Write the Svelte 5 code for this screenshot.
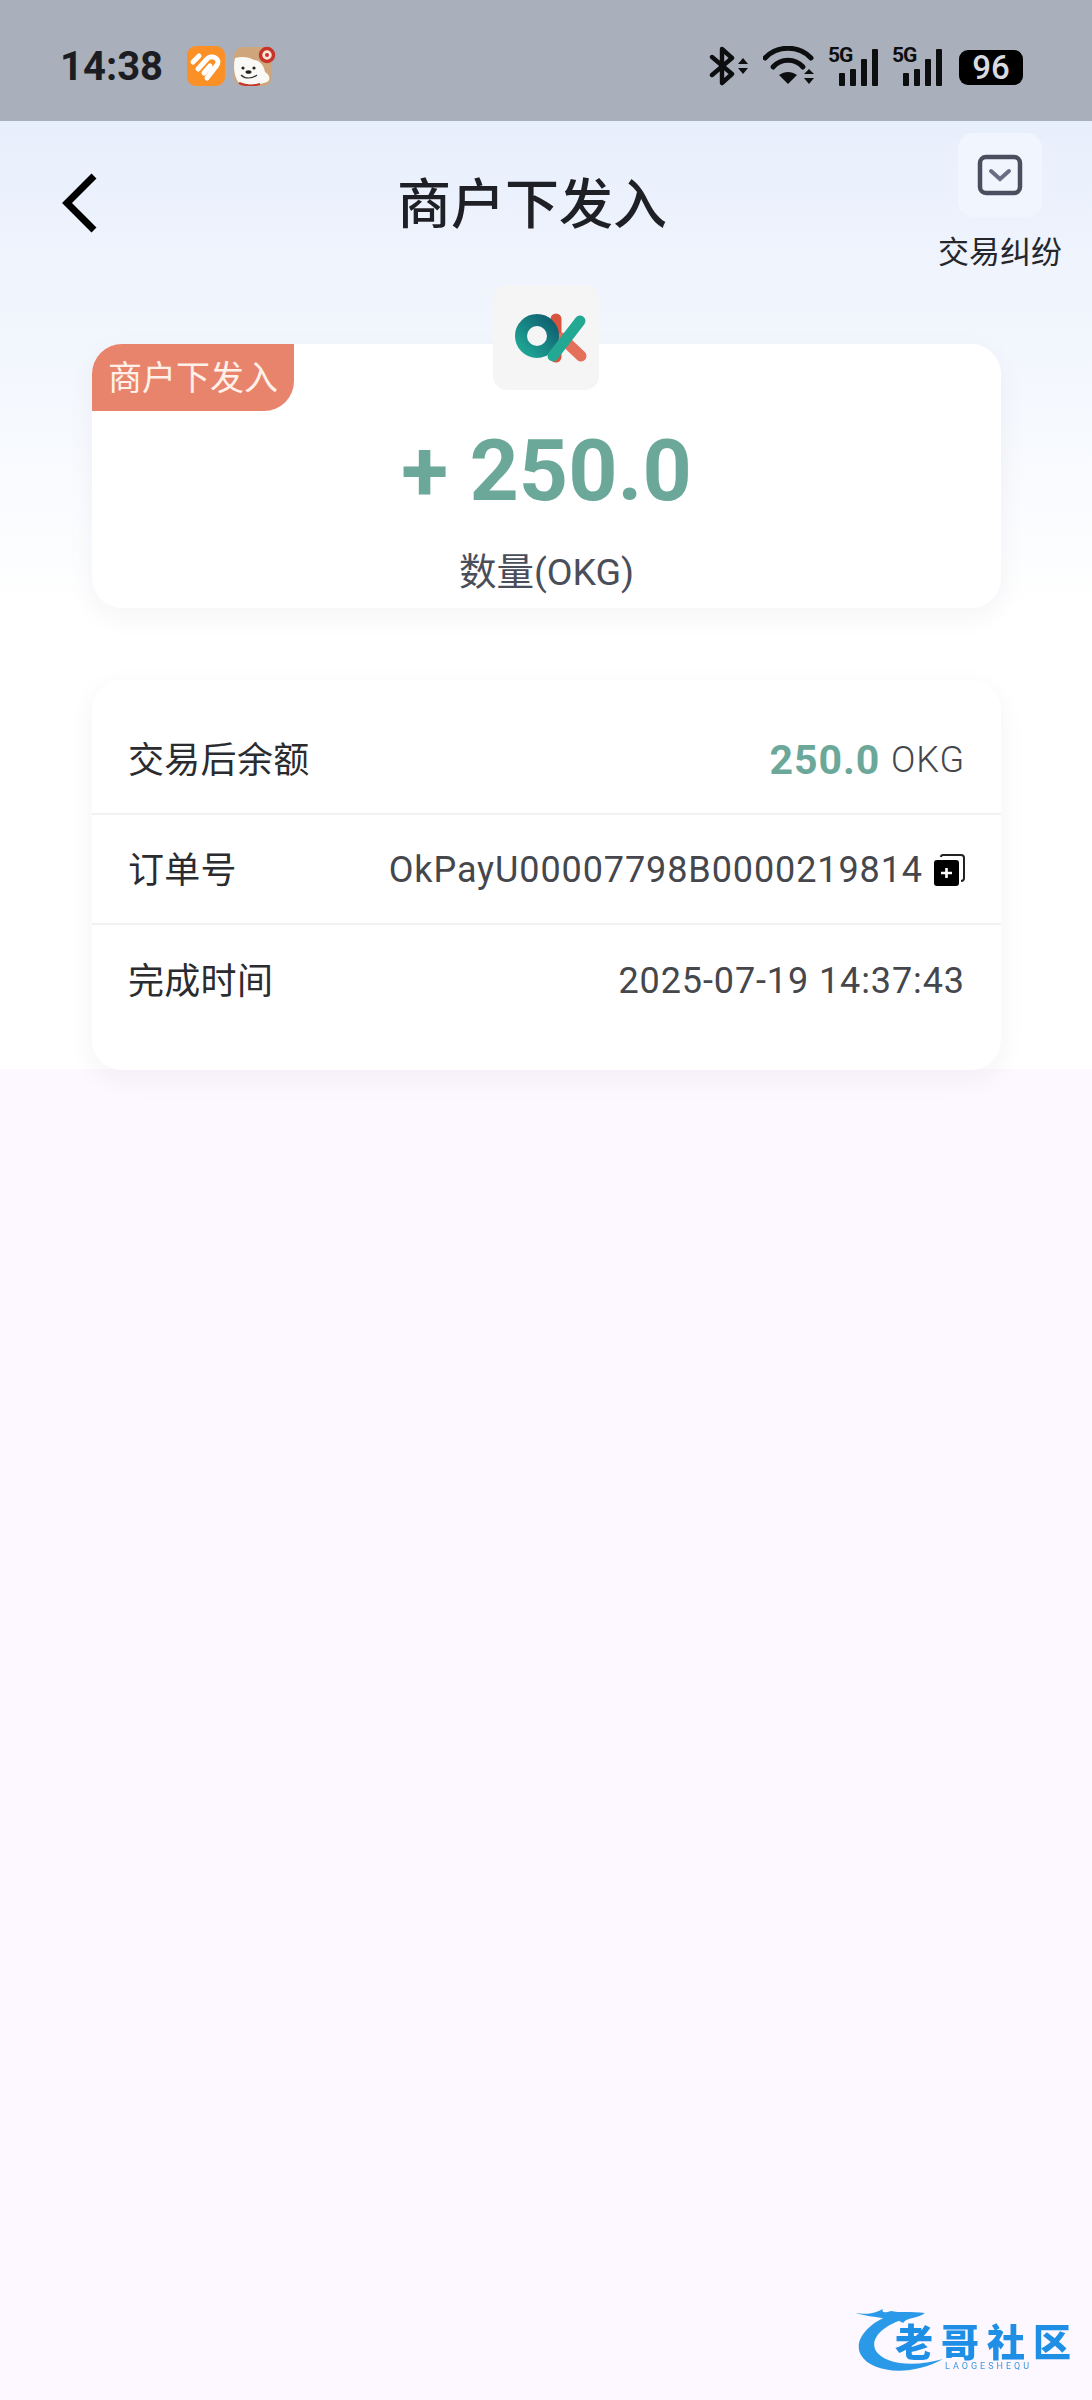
<script>
    // datos de la tarjeta de detalle
    const rows = [
        { label: '交易后余额', kind: 'balance', amount: '250.0', unit: 'OKG' },
        { label: '订单号', kind: 'order', value: 'OkPayU00007798B0000219814' },
        { label: '完成时间', kind: 'plain', value: '2025-07-19 14:37:43' }
    ];
    const sims = [1, 2];
</script>

<div class="page">
    <!-- Barra de estado -->
    <div class="status">
        <div class="status-left">
            <span class="time">14:38</span>
            <svg class="app-icon" viewBox="0 0 38 40">
                <rect width="38" height="40" rx="9" fill="#fb9027" />
                <path d="M6 16 L12 10 M11 23 L20 13 C25 8 34 13 30 19 L20 32 M17 27 L23 20" fill="none" stroke="#fff" stroke-width="5" stroke-linecap="round" />
            </svg>
            <svg class="app-icon dog" viewBox="0 0 42 40">
                <rect y="1" width="38" height="39" rx="9" fill="#cfa67c" />
                <path d="M1 12 C8 10 15 11 20 14 C26 14 30 20 31 26 C36 29 37 34 33 36 C25 39 10 40 5 37 C0 31 -1 20 1 12 Z" fill="#fbf9f5" />
                <circle cx="33" cy="9" r="6.5" fill="#fbe6d8" stroke="#c9342a" stroke-width="3.5" />
                <circle cx="33" cy="9" r="2" fill="#c9342a" />
                <circle cx="9" cy="22" r="1.6" fill="#222" />
                <circle cx="20" cy="22" r="1.6" fill="#222" />
                <ellipse cx="14.5" cy="26" rx="3" ry="1.8" fill="#222" />
                <path d="M7 29 C11 33 18 33 23 29" fill="none" stroke="#333" stroke-width="1.2" />
                <path d="M5 37 C11 40 20 40 26 38" fill="none" stroke="#c9342a" stroke-width="2" />
            </svg>
        </div>
        <div class="status-right">
            <svg class="bt" viewBox="0 0 39 40">
                <path d="M3 11 L23 28 L13 37 L13 3 L23 12 L3 29" fill="none" stroke="#0d0e10" stroke-width="4.4" stroke-linejoin="round" stroke-linecap="round" />
                <path d="M29 18 L34 12 L39 18 Z M29 22 L34 28 L39 22 Z" fill="#0d0e10" />
            </svg>
            <svg class="wifi" viewBox="0 0 53 40">
                <path d="M2 12 C14 -1 36 -1 48 12" fill="none" stroke="#0d0e10" stroke-width="5" stroke-linecap="round" />
                <path d="M10 21 C18 12 32 12 40 21" fill="none" stroke="#0d0e10" stroke-width="5" stroke-linecap="round" />
                <path d="M16 29 L25 38 L34 29 C28 25 22 25 16 29 Z" fill="#0d0e10" />
                <path d="M41 28 L46 23 L51 28 Z M41 32 L46 38 L51 32 Z" fill="#0d0e10" />
            </svg>
            {#each sims as sim}
                <div class="signal">
                    <span class="five-g">5G</span>
                    <i class="bar b1"></i>
                    <i class="bar b2"></i>
                    <i class="bar b3"></i>
                    <i class="bar b4"></i>
                </div>
            {/each}
            <div class="battery"><span>96</span></div>
        </div>
    </div>

    <div class="top">
        <!-- Cabecera -->
        <div class="header">
            <svg class="back" viewBox="0 0 36 60">
                <path d="M33 3 L6 30 L33 57" fill="none" stroke="#000" stroke-width="7" />
            </svg>
            <h1>商户下发入</h1>
            <div class="dispute">
                <div class="dispute-box">
                    <svg viewBox="0 0 46 42">
                        <rect x="3" y="3" width="40" height="36" rx="6" fill="none" stroke="#4b4e5e" stroke-width="4.5" />
                        <path d="M14 17 L23 25 L32 17" fill="none" stroke="#6a6d85" stroke-width="4" stroke-linecap="round" />
                    </svg>
                </div>
                <span>交易纠纷</span>
            </div>
        </div>

        <!-- Importe -->
        <div class="card amount-card">
            <div class="tag">商户下发入</div>
            <div class="logo">
                <svg viewBox="0 0 106 105">
                    <defs>
                        <linearGradient id="ring" x1="0" y1="1" x2="1" y2="0">
                            <stop offset="0" stop-color="#1fa795" />
                            <stop offset="1" stop-color="#0f5f70" />
                        </linearGradient>
                    </defs>
                    <path d="M63 34 L63 72" stroke="#d9543f" stroke-width="11" stroke-linecap="round" />
                    <path d="M69 53 L88 71" stroke="#e4705c" stroke-width="11" stroke-linecap="round" />
                    <circle cx="44" cy="51" r="16" fill="none" stroke="url(#ring)" stroke-width="12" />
                    <path d="M60 71 L87 36" stroke="#22a893" stroke-width="11" stroke-linecap="round" />
                </svg>
            </div>
            <div class="amount">+ 250.0</div>
            <div class="amount-label">数量(OKG)</div>
        </div>

        <!-- Detalle -->
        <div class="card detail-card">
            {#each rows as row}
                <div class="row">
                    <span class="label">{row.label}</span>
                    {#if row.kind === 'balance'}
                        <span class="value"><b>{row.amount}</b> <em>{row.unit}</em></span>
                    {:else if row.kind === 'order'}
                        <span class="value order">
                            {row.value}
                            <svg class="copy" viewBox="0 0 31 32">
                                <path d="M7 3 Q7 1 9 1 L27 1 Q30 1 30 4 L30 24 Q30 27 27 27" fill="none" stroke="#222" stroke-width="2" />
                                <rect x="0" y="6" width="25" height="26" rx="3" fill="#000" />
                                <path d="M7 19 L18 19 M12.5 14 L12.5 24" stroke="#fff" stroke-width="2.6" />
                            </svg>
                        </span>
                    {:else}
                        <span class="value">{row.value}</span>
                    {/if}
                </div>
            {/each}
        </div>
    </div>

    <!-- Marca de agua -->
    <div class="watermark">
        <svg viewBox="0 0 100 70">
            <path d="M38 9 C12 18 -2 36 6 50 C16 68 56 72 88 54 C60 62 30 60 21 46 C14 34 28 20 50 14 Z" fill="#2a9ae8" />
            <path d="M0 8 C14 10 20 8 28 4 C26 8 30 8 36 6 C44 8 56 6 70 8 C62 14 52 12 48 18 C42 14 36 14 30 14 C26 12 14 12 0 8 Z" fill="#2a9ae8" />
        </svg>
        <div class="wm-text">
            <strong>老哥社区</strong>
            <small>LAOGESHEQU</small>
        </div>
    </div>
</div>

<style>
    :global(body) {
        margin: 0;
        background: #fdf7ff;
    }

    .page {
        position: relative;
        min-height: 2400px;
        font-family: Roboto, "Noto Sans CJK SC", sans-serif;
        background: #fdf7ff;
    }

    .status {
        height: 121px;
        box-sizing: border-box;
        padding: 46px 69px 0 60px;
        display: flex;
        justify-content: space-between;
        align-items: flex-start;
        background: #a9afbb;
    }

    .status-left {
        display: flex;
        align-items: center;
        height: 40px;
    }

    .time {
        font-size: 40px;
        font-weight: 700;
        color: #1b1d22;
        width: 127px;
    }

    .app-icon {
        width: 38px;
        height: 40px;
        margin-right: 9px;
    }

    .app-icon.dog {
        width: 42px;
    }

    .status-right {
        display: flex;
        align-items: flex-end;
        height: 40px;
    }

    .bt {
        width: 39px;
        height: 40px;
        margin-right: 15px;
    }

    .wifi {
        width: 53px;
        height: 40px;
        margin-right: 13px;
    }

    .signal {
        position: relative;
        width: 49px;
        height: 38px;
        margin-right: 15px;
    }

    .five-g {
        position: absolute;
        left: -1px;
        top: -5px;
        font-size: 21px;
        font-weight: 700;
        letter-spacing: -1px;
        color: #0d0e10;
    }

    .bar {
        position: absolute;
        bottom: 0;
        width: 6px;
        background: #0d0e10;
        border-radius: 1px;
    }

    .b1 {
        left: 10px;
        height: 13px;
    }

    .b2 {
        left: 21px;
        height: 17px;
    }

    .b3 {
        left: 32px;
        height: 27px;
    }

    .b4 {
        left: 43px;
        height: 37px;
    }

    .battery {
        width: 64px;
        height: 35px;
        margin-left: 2px;
        margin-bottom: 1px;
        display: flex;
        align-items: center;
        justify-content: center;
        background: #000;
        border-radius: 9px;
        color: #d9dbe0;
        font-size: 33px;
        font-weight: 500;
    }

    .top {
        height: 948px;
        box-sizing: border-box;
        background: linear-gradient(#e8effc 0, #ffffff 490px);
    }

    .header {
        height: 223px;
        box-sizing: border-box;
        padding: 12px 30px 0 61px;
        display: flex;
        align-items: flex-start;
    }

    .back {
        width: 36px;
        height: 60px;
        margin-top: 40px;
    }

    h1 {
        margin: 33px 0 0 300px;
        font-size: 54px;
        line-height: 80px;
        font-weight: 500;
        color: #1f2025;
        white-space: nowrap;
    }

    .dispute {
        margin-left: auto;
        display: flex;
        flex-direction: column;
        align-items: center;
        font-size: 31px;
        color: #25262b;
    }

    .dispute-box {
        width: 84px;
        height: 84px;
        display: flex;
        align-items: center;
        justify-content: center;
        background: #f1f6fe;
        border-radius: 16px;
    }

    .dispute-box svg {
        width: 46px;
        height: 42px;
    }

    .dispute span {
        margin-top: 16px;
        line-height: 40px;
        white-space: nowrap;
    }

    .card {
        position: relative;
        width: 909px;
        margin-left: 92px;
        box-sizing: border-box;
        background: #fff;
        border-radius: 30px;
        box-shadow: 0 8px 28px rgba(40, 40, 70, 0.05);
    }

    .amount-card {
        height: 264px;
        text-align: center;
        padding-top: 77px;
    }

    .tag {
        position: absolute;
        left: 0;
        top: 0;
        width: 202px;
        height: 67px;
        line-height: 69px;
        text-align: center;
        font-size: 34px;
        color: #fff1ea;
        background: #e9846c;
        border-radius: 30px 0 30px 0;
    }

    .logo {
        position: absolute;
        left: 401px;
        top: -59px;
        width: 106px;
        height: 105px;
        background: #f5f5f6;
        border-radius: 14px;
    }

    .logo svg {
        display: block;
        width: 106px;
        height: 105px;
    }

    .amount {
        font-size: 86px;
        line-height: 100px;
        font-weight: 700;
        color: #6ba89a;
    }

    .amount-label {
        margin-top: 26px;
        font-size: 37.5px;
        line-height: 50px;
        color: #4a4e5a;
    }

    .detail-card {
        margin-top: 72px;
        height: 390px;
        padding-top: 25px;
    }

    .row {
        height: 110px;
        box-sizing: border-box;
        padding: 2px 36px 0;
        display: flex;
        justify-content: space-between;
        align-items: center;
        border-bottom: 2px solid #f2f2f3;
    }

    .row:last-child {
        border-bottom: none;
    }

    .label {
        padding-bottom: 6px;
        font-size: 36px;
        letter-spacing: 0.3px;
        color: #2b2c30;
    }

    .value {
        font-size: 36px;
        letter-spacing: 0.9px;
        color: #45474c;
        display: flex;
        align-items: center;
    }

    .value b {
        font-size: 41px;
        font-weight: 700;
        color: #6ba89a;
        margin-right: 11px;
    }

    .value em {
        font-style: normal;
        font-weight: 300;
    }

    .copy {
        width: 31px;
        height: 32px;
        margin-left: 11px;
    }

    .watermark {
        position: absolute;
        left: 855px;
        top: 2305px;
        width: 225px;
        height: 70px;
        filter: blur(0.5px);
    }

    .watermark svg {
        position: absolute;
        left: 0;
        top: 0;
        width: 100px;
        height: 70px;
    }

    .wm-text {
        position: absolute;
        left: 40px;
        top: 21px;
        width: 185px;
    }

    .wm-text strong {
        display: block;
        font-size: 38px;
        line-height: 34px;
        font-weight: 900;
        letter-spacing: 8px;
        white-space: nowrap;
        color: #1f8fe6;
    }

    .wm-text small {
        display: block;
        margin: 1px 0 0 50px;
        font-size: 9px;
        line-height: 10px;
        letter-spacing: 3px;
        white-space: nowrap;
        color: #3d97df;
    }
</style>
